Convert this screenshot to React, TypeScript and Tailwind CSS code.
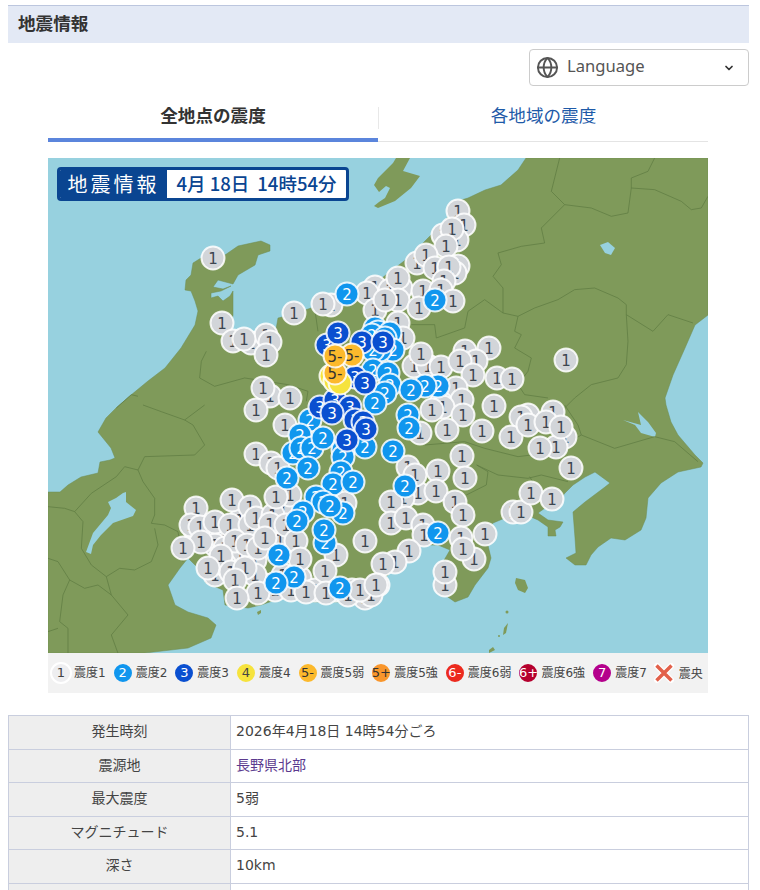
import { Globe, ChevronDown } from "lucide-react";

const jp = "font-['Noto_Sans_CJK_JP','Noto_Sans',sans-serif]";
const mixed = "font-['DejaVu_Sans','Noto_Sans_CJK_JP',sans-serif]";

const land =
  "0,334 12,334 20,327 33,319 50,315 52,304 62,302 67,300 63,290 50,274 58,260 68,250 83,237 100,223 117,210 133,190 147,167 150,153 147,143 143,133 137,132 138,122 143,117 145,105 153,100 177,97 190,88 213,83 222,87 222,93 210,97 207,107 190,117 185,126 170,122 165,129 175,131 183,128 173,133 163,135 163,140 170,138 175,143 182,138 185,133 185,157 182,173 203,190 227,177 230,160 243,157 263,150 283,147 300,147 317,133 330,123 360,100 383,77 397,63 410,43 420,40 437,32 453,27 470,12 478,0 660,0 660,157 647,167 637,190 625,217 617,240 618,247 623,264 630,277 647,297 655,305 653,309 630,314 613,325 600,340 598,360 593,372 577,382 563,380 550,389 543,397 538,407 527,407 518,400 528,395 527,380 525,354 537,344 557,329 562,325 547,314 537,319 525,327 517,335 505,350 497,350 490,355 500,362 515,364 512,369 507,372 508,378 500,378 500,369 490,362 483,359 470,360 457,360 445,365 437,375 443,400 440,410 427,427 420,439 407,444 397,437 395,404 402,392 390,387 373,387 350,397 340,417 330,427 300,444 267,444 233,440 213,447 200,450 177,447 175,432 163,427 157,424 163,422 157,417 140,400 132,410 120,427 127,447 140,454 160,460 168,467 163,480 140,490 97,495 0,495";

const islands = [
  "362,0 355,13 372,18 363,30 347,43 330,50 326,48 331,44 337,40 342,30 338,28 331,34 326,27 330,20 345,5 348,0",
  "468,420 477,422 480,430 477,435 470,432 467,425",
  "460,465 458,475 455,477 456,470",
  "445,489 447,492 441,495 441,492",
  "209,454 213,452 213,455 210,457",
];

const lakes = [
  "75,335 78,334 78,344 88,352 85,358 65,365 53,377 45,387 43,396 38,394 45,375 60,357 63,350 60,344 68,340",
  "575,262 593,267 590,254 600,264 608,275 607,279 593,275 587,267",
  "552,87 560,84 567,90 563,97 557,95",
];

// traced borders, each group in its own 3x crop coordinates
const borders: { dx: number; dy: number; lines: string[] }[] = [
  {
    dx: 0,
    dy: 0,
    lines: [
      "205,750 250,710 270,715",
      "475,580 460,610 455,660 500,685 590,660 720,680 780,700 775,730",
      "800,450 810,520",
    ],
  },
  {
    dx: 330,
    dy: 0,
    lines: [
      "545,0 520,100 560,140 640,150 700,175 750,165 760,90 830,95 910,130 940,155 970,150 990,115",
      "830,0 810,40 760,60 760,90",
      "560,140 490,210 500,255 430,265 360,285 370,320 345,355 375,390 375,465 420,475 470,450 540,425 590,395 650,390 720,420 745,440 745,470 825,520 870,470 945,495",
      "745,470 750,550 745,620 720,660 640,680 590,720 560,750",
      "420,475 410,520 430,530 410,570 460,600 450,640 420,680 440,710 510,720",
      "375,465 320,425 270,460 260,510 175,540 170,500 100,500",
    ],
  },
  {
    dx: 0,
    dy: 247,
    lines: [
      "285,0 340,20 410,45 470,0",
      "410,45 435,60 470,120 440,150 290,155 270,195 230,185 205,215",
      "270,195 285,230 320,280 320,330 310,355 350,360 390,380 405,470",
      "320,370 330,420 310,470 260,495 215,490 175,515 130,480 100,430 105,350 80,320 130,265 205,215",
      "80,320 50,310 0,305",
      "0,460 30,470 65,525 45,570 35,650 60,670 60,745",
      "175,515 190,570 240,630 190,690 210,745",
      "65,525 110,550 150,540 190,570",
      "0,680 30,670",
    ],
  },
  {
    dx: 330,
    dy: 247,
    lines: [
      "140,120 260,110 320,130 420,155 460,150 540,130 610,90 710,130 830,95 890,110 960,170",
      "610,90 600,60 560,0",
      "296,180 360,210 450,220 490,210 570,230",
      "296,180 330,200 325,240 265,270",
      "455,215 470,240",
    ],
  },
];

// page coordinates of the station markers, per intensity
const ones: [number, number][] = [
  [205, 527], [195, 530], [210, 535], [225, 530], [240, 520], [262, 530], [278, 530], [215, 545], [225, 548], [240, 555],
  [255, 560], [215, 575], [225, 565], [265, 585], [275, 590], [283, 575], [300, 578], [315, 590], [335, 590], [352, 590],
  [365, 598], [280, 540], [283, 510], [290, 495],
  [213, 258], [294, 313], [222, 323], [233, 341], [251, 343], [266, 335], [244, 339], [270, 342], [266, 355],
  [270, 396], [263, 388], [290, 398], [256, 410], [285, 425], [256, 454], [271, 463], [278, 468],
  [331, 305], [323, 304], [375, 287], [367, 293], [375, 310], [398, 295], [401, 288], [390, 290], [398, 278], [398, 300], [385, 300],
  [458, 211], [464, 225], [457, 240], [443, 235], [452, 229], [446, 246], [417, 263], [426, 255], [458, 266], [455, 273], [435, 268], [449, 267],
  [444, 281], [423, 291], [441, 290], [419, 308], [453, 301], [398, 323], [403, 338],
  [414, 366], [428, 366], [421, 354], [441, 367], [465, 351], [489, 348], [476, 361], [460, 361], [473, 375], [497, 378], [512, 379], [566, 360],
  [456, 388], [441, 403], [462, 400], [494, 406], [443, 407], [463, 415], [447, 430], [482, 431], [420, 433], [432, 410],
  [528, 415], [553, 412], [521, 417], [565, 437], [556, 447], [511, 437], [528, 425], [546, 422], [561, 427], [540, 448], [571, 468],
  [462, 456], [465, 478], [418, 493], [408, 467], [415, 475], [438, 471], [436, 491], [403, 498], [391, 502], [455, 502], [463, 515], [391, 523], [406, 518],
  [423, 525], [424, 535], [485, 534], [461, 538], [474, 559], [463, 549], [409, 551], [395, 562], [383, 564], [378, 585], [445, 585], [445, 572],
  [513, 512], [521, 512], [531, 493], [552, 499],
  [196, 508], [232, 500], [250, 507], [191, 525], [200, 527], [215, 522], [230, 525], [250, 525], [256, 518], [273, 515], [276, 497], [270, 524], [286, 525],
  [201, 542], [183, 548], [235, 541], [247, 545], [258, 548], [265, 538], [221, 556], [208, 568], [231, 572], [255, 575], [245, 568], [235, 580], [258, 593], [237, 598],
  [296, 541], [300, 559], [336, 555], [365, 541], [345, 503], [325, 571], [291, 582], [291, 590], [306, 592], [326, 593], [348, 595], [371, 595], [360, 590], [376, 585],
];
const twos: [number, number][] = [
  [347, 294], [435, 300], [375, 328], [378, 332], [390, 333], [372, 335], [385, 338], [393, 350], [380, 350], [373, 350], [373, 370], [388, 373], [390, 385], [385, 393], [375, 403],
  [438, 386], [425, 386], [411, 390], [408, 415], [409, 428], [393, 451], [365, 447],
  [310, 420], [300, 435], [293, 453], [301, 448], [312, 448], [323, 438], [343, 450], [343, 457], [308, 468], [341, 472], [287, 478], [333, 484], [353, 482],
  [316, 497], [323, 502], [343, 513], [330, 506], [303, 512], [297, 521], [325, 543], [324, 530], [405, 486], [438, 533], [279, 555], [294, 577], [276, 583], [340, 588],
];
const threes: [number, number][] = [
  [327, 345], [338, 333], [362, 342], [383, 342], [355, 377], [365, 383], [320, 407], [335, 400], [350, 407], [355, 420], [363, 422], [332, 413], [366, 429], [347, 440],
];
const fours: [number, number][] = [[331, 376], [335, 381], [340, 383]];
const fiveLows: [number, number][] = [[335, 373], [352, 355], [335, 356]];

function Marker({ x, y, fill, label, color }: { x: number; y: number; fill: string; label: string; color: string }) {
  return (
    <g transform={`translate(${x - 48} ${y - 158})`}>
      <circle r={11.5} fill={fill} stroke="#fff" strokeOpacity={0.85} strokeWidth={2} />
      <text y={5.5} textAnchor="middle" fontSize={15} fill={color} fontFamily="'DejaVu Sans', sans-serif">
        {label}
      </text>
    </g>
  );
}

function QuakeMap() {
  return (
    <svg viewBox="0 0 660 495" className="block w-[660px] h-[495px]">
      <rect width={660} height={495} fill="#97d1df" />
      <polygon points={land} fill="#7f9a5a" stroke="#6f8c50" strokeWidth={0.5} />
      {islands.map((p) => (
        <polygon key={p} points={p} fill="#7f9a5a" />
      ))}
      <circle cx={459} cy={454} r={1.5} fill="#7f9a5a" />
      <circle cx={451} cy={478} r={1} fill="#7f9a5a" />
      {lakes.map((p) => (
        <polygon key={p} points={p} fill="#97d1df" />
      ))}
      {borders.map((g) => (
        <g key={`${g.dx}-${g.dy}`} transform={`translate(${g.dx} ${g.dy}) scale(0.3333)`}>
          {g.lines.map((l) => (
            <polyline key={l} points={l} fill="none" stroke="#5f7b42" strokeWidth={2.2} />
          ))}
        </g>
      ))}
      {ones.map(([x, y]) => (
        <Marker key={`1-${x}-${y}`} x={x} y={y} fill="#d2d5d9" label="1" color="#3d4650" />
      ))}
      {twos.map(([x, y]) => (
        <Marker key={`2-${x}-${y}`} x={x} y={y} fill="#1096ee" label="2" color="#fff" />
      ))}
      {threes.map(([x, y]) => (
        <Marker key={`3-${x}-${y}`} x={x} y={y} fill="#0a4fd0" label="3" color="#fff" />
      ))}
      {fours.map(([x, y]) => (
        <Marker key={`4-${x}-${y}`} x={x} y={y} fill="#f6e33d" label="" color="#333" />
      ))}
      {fiveLows.map(([x, y]) => (
        <Marker key={`5-${x}-${y}`} x={x} y={y} fill="#fcb92c" label="5-" color="#333" />
      ))}
    </svg>
  );
}

const legend = [
  { badge: "1", fill: "bg-[#eeeef0]", ring: "border-white", text: "text-[#444]", label: "震度1" },
  { badge: "2", fill: "bg-[#1096ee]", ring: "border-[#f2f2f2]", text: "text-white", label: "震度2" },
  { badge: "3", fill: "bg-[#0a4fd0]", ring: "border-[#f2f2f2]", text: "text-white", label: "震度3" },
  { badge: "4", fill: "bg-[#f6e33d]", ring: "border-[#f2f2f2]", text: "text-[#444]", label: "震度4" },
  { badge: "5-", fill: "bg-[#fcb92c]", ring: "border-[#f2f2f2]", text: "text-[#333]", label: "震度5弱" },
  { badge: "5+", fill: "bg-[#f9962c]", ring: "border-[#f2f2f2]", text: "text-[#333]", label: "震度5強" },
  { badge: "6-", fill: "bg-[#ec2a1e]", ring: "border-[#f2f2f2]", text: "text-white", label: "震度6弱" },
  { badge: "6+", fill: "bg-[#b5002e]", ring: "border-[#f2f2f2]", text: "text-white", label: "震度6強" },
  { badge: "7", fill: "bg-[#b4008c]", ring: "border-[#f2f2f2]", text: "text-white", label: "震度7" },
];

const rows = [
  { th: "発生時刻", td: "2026年4月18日 14時54分ごろ" },
  { th: "震源地", td: "長野県北部", link: true },
  { th: "最大震度", td: "5弱" },
  { th: "マグニチュード", td: "5.1" },
  { th: "深さ", td: "10km" },
  { th: "緯度/経度", td: "北緯36.8度/東経137.9度" },
];

export default function App() {
  return (
    <div className={`h-[890px] overflow-hidden bg-white text-[#333] ${jp}`}>
      <div className="pt-[5px] pl-2 pr-[11px]">
        <h2 className="h-[38px] border-t border-[#bcc6de] bg-[#e3e9f5] pl-[10px] text-[17.6px] leading-[34px] font-bold text-[#333]">
          地震情報
        </h2>

        <div className="mt-[6px] flex justify-end">
          <div className="flex h-[37px] w-[220px] items-center rounded border border-[#ccc] pl-[6px] pr-[13px] pb-[2px] text-[#555]">
            <Globe className="h-[23px] w-[23px] mt-[2px]" strokeWidth={2} />
            <span className="ml-[8px] text-[16.6px] font-['Noto_Sans',sans-serif]">Language</span>
            <ChevronDown className="ml-auto h-[12px] w-[12px] text-[#333] mt-[2px]" strokeWidth={3.5} />
          </div>
        </div>

        <div className="ml-10 mr-[41px] mt-[9px] flex h-[47px] border-b border-[#e4e4e4] text-[17.6px]">
          <div className="-mb-px flex w-[330px] items-center justify-center border-b-[4px] border-[#5b85dc] pb-[3px] font-bold">
            全地点の震度
          </div>
          <div className="mt-3 mb-3 w-px bg-[#e8e8e8]" />
          <div className="flex flex-1 items-center justify-center pb-[6px] text-[#1e5aa8]">各地域の震度</div>
        </div>

        <div className="relative ml-10 mr-[41px] mt-4">
          <QuakeMap />
          <div className="absolute top-[9px] left-[9px] flex h-[34px] w-[292px] overflow-hidden rounded border-[3px] border-[#0a4591] bg-white">
            <div className="flex w-[107px] items-center justify-center bg-[#0a4591] text-[20px] tracking-[3px] text-white">
              地震情報
            </div>
            <div className="flex flex-1 items-center justify-center gap-[8px] text-[18.5px] font-medium text-[#0a4591]">
              <span>4月 18日</span>
              <span>14時54分</span>
            </div>
          </div>
          <div className="flex h-10 items-center gap-[6px] bg-[#f2f2f2] pl-[2px] text-[12px] text-[#444]">
            {legend.map((l) => (
              <div key={l.label} className="flex items-center gap-[2px]">
                <span
                  className={`flex h-[22px] w-[22px] items-center justify-center rounded-full border-2 text-[13px] font-['DejaVu_Sans',sans-serif] ${l.fill} ${l.ring} ${l.text}`}
                >
                  {l.badge}
                </span>
                <span className={mixed}>{l.label}</span>
              </div>
            ))}
            <div className="flex items-center gap-[4px]">
              <svg viewBox="0 0 22 22" className="h-[22px] w-[22px]">
                <path d="M4 4 18 18M18 4 4 18" stroke="#fff" strokeWidth={6} strokeLinecap="round" />
                <path d="M3.5 3.5 18.5 18.5M18.5 3.5 3.5 18.5" stroke="#e2604a" strokeWidth={3.5} />
              </svg>
              <span>震央</span>
            </div>
          </div>
        </div>

        <table className="mt-[22px] w-full table-fixed border-collapse text-[14px] text-[#444]">
          <tbody>
            {rows.map((r) => (
              <tr key={r.th} className="h-[33.5px]">
                <th className="w-[222px] border border-[#c9cede] bg-[#eeeeee] pb-[3px] text-center font-normal">{r.th}</th>
                <td className={`border border-[#c9cede] px-[5px] pb-[1px] ${mixed} ${r.link ? "text-[#5b3a8e]" : ""}`}>{r.td}</td>
              </tr>
            ))}
          </tbody>
        </table>
      </div>
    </div>
  );
}
